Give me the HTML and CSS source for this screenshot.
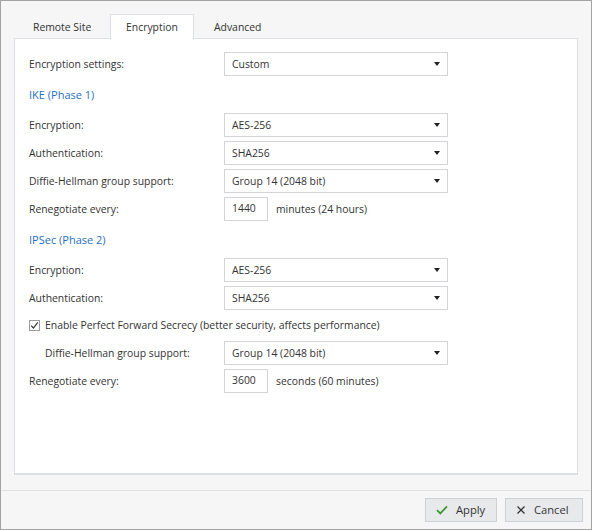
FILE: index.html
```html
<!DOCTYPE html>
<html>
<head>
<meta charset="utf-8">
<link rel="stylesheet" href="styles.css">
</head>
<body>
<div class="window">
  <div class="main">
    <div class="tabs">
      <div class="tab">Remote Site</div>
      <div class="tab active">Encryption</div>
      <div class="tab">Advanced</div>
    </div>
    <div class="panel">
      <div class="row">
        <div class="label">Encryption settings:</div>
        <div class="select"><span>Custom</span><span class="caret"></span></div>
      </div>
      <div class="heading">IKE (Phase 1)</div>
      <div class="row">
        <div class="label">Encryption:</div>
        <div class="select"><span>AES-256</span><span class="caret"></span></div>
      </div>
      <div class="row">
        <div class="label">Authentication:</div>
        <div class="select"><span>SHA256</span><span class="caret"></span></div>
      </div>
      <div class="row">
        <div class="label">Diffie-Hellman group support:</div>
        <div class="select"><span>Group 14 (2048 bit)</span><span class="caret"></span></div>
      </div>
      <div class="row">
        <div class="label">Renegotiate every:</div>
        <div class="input">1440</div>
        <div class="unit">minutes (24 hours)</div>
      </div>
      <div class="heading">IPSec (Phase 2)</div>
      <div class="row">
        <div class="label">Encryption:</div>
        <div class="select"><span>AES-256</span><span class="caret"></span></div>
      </div>
      <div class="row">
        <div class="label">Authentication:</div>
        <div class="select"><span>SHA256</span><span class="caret"></span></div>
      </div>
      <div class="row check-row">
        <span class="checkbox"><svg width="9" height="9" viewBox="0 0 9 9"><path d="M1.2 4.6 L3.4 7 L7.8 1.4" fill="none" stroke="#333" stroke-width="1.2"/></svg></span>
        <span>Enable Perfect Forward Secrecy (better security, affects performance)</span>
      </div>
      <div class="row">
        <div class="label indent">Diffie-Hellman group support:</div>
        <div class="select"><span>Group 14 (2048 bit)</span><span class="caret"></span></div>
      </div>
      <div class="row">
        <div class="label">Renegotiate every:</div>
        <div class="input">3600</div>
        <div class="unit">seconds (60 minutes)</div>
      </div>
    </div>
  </div>
  <div class="footer">
    <button class="btn apply"><svg width="12" height="10" viewBox="0 0 12 10"><path d="M1 5.2 L4.3 8.4 L11 1.4" fill="none" stroke="#3a9a2a" stroke-width="1.8"/></svg>Apply</button>
    <button class="btn cancel"><svg width="10" height="10" viewBox="0 0 10 10"><path d="M1.5 1.5 L8.5 8.5 M8.5 1.5 L1.5 8.5" fill="none" stroke="#333" stroke-width="1.3"/></svg>Cancel</button>
  </div>
</div>
</body>
</html>
```

FILE: styles.css
```css
* { box-sizing: border-box; }
html, body { margin: 0; padding: 0; }
body {
  font-family: "Open Sans", "Noto Sans", sans-serif;
  font-size: 10.4px;
  color: #333;
  background: #f6f6f6;
}
.window {
  width: 592px;
  height: 530px;
  border: 1px solid #a3a3a3;
  background: #f6f6f6;
  display: flex;
  flex-direction: column;
}
.main {
  padding: 13px 13px 0 13px;
  height: 490px;
  border-bottom: 1px solid #dfe1e5;
}
.tabs {
  display: flex;
  height: 24px;
  padding-left: 1px;
  position: relative;
  z-index: 1;
}
.tab {
  height: 25px;
  line-height: 24px;
  padding: 0 17px;
  border: 1px solid transparent;
  border-bottom: none;
}
.tab:first-child { width: 95px; padding: 0 0 0 17px; }
.tab.active {
  width: 84px;
  padding: 0;
  text-align: center;
  background: #fff;
  border-color: #dce0e6;
}
.tab:last-child { padding-left: 19px; }
.panel {
  height: 437px;
  background: #fff;
  border: 1px solid #dce0e6;
  border-bottom-width: 2px;
  padding: 13px 0 0 14px;
  display: flex;
  flex-direction: column;
  gap: 4px;
}
.row {
  display: flex;
  align-items: center;
  height: 24px;
  padding-bottom: 1px;
}
.label { width: 195px; }
.label.indent { padding-left: 16px; }
.select {
  width: 224px;
  height: 24px;
  border: 1px solid #d2d4d8;
  display: flex;
  align-items: center;
  justify-content: space-between;
  padding: 0 6px 1px 7px;
  margin-bottom: -1px;
}
.caret {
  width: 0; height: 0;
  margin-right: 1px;
  border-left: 3.5px solid transparent;
  border-right: 3.5px solid transparent;
  border-top: 4px solid #222;
}
.input {
  width: 44px;
  height: 24px;
  border: 1px solid #d2d4d8;
  line-height: 21px;
  padding-left: 7px;
  margin-bottom: -1px;
}
.unit { margin-left: 8px; }
.heading {
  color: #1f70c1;
  font-size: 11px;
  line-height: 16px;
  padding: 7px 0 6px 0;
}
.check-row { height: 23px; }
.checkbox {
  width: 11px;
  height: 11px;
  border: 1px solid #9a9a9a;
  display: inline-flex;
  align-items: center;
  justify-content: center;
  margin-right: 5px;
  background: #fff;
}
.footer {
  flex: 1;
  display: flex;
  justify-content: flex-end;
  gap: 8px;
  padding: 7px 8px 0 0;
}
.btn {
  height: 24px;
  font-family: inherit;
  font-size: 11.2px;
  color: #333;
  background: #e8e9eb;
  border: 1px solid #cdd0d4;
  display: flex;
  align-items: center;
  gap: 8px;
  padding: 0 0 1px 10px;
  margin: 0;
}
.apply { width: 72px; }
.cancel { width: 78px; }
```
